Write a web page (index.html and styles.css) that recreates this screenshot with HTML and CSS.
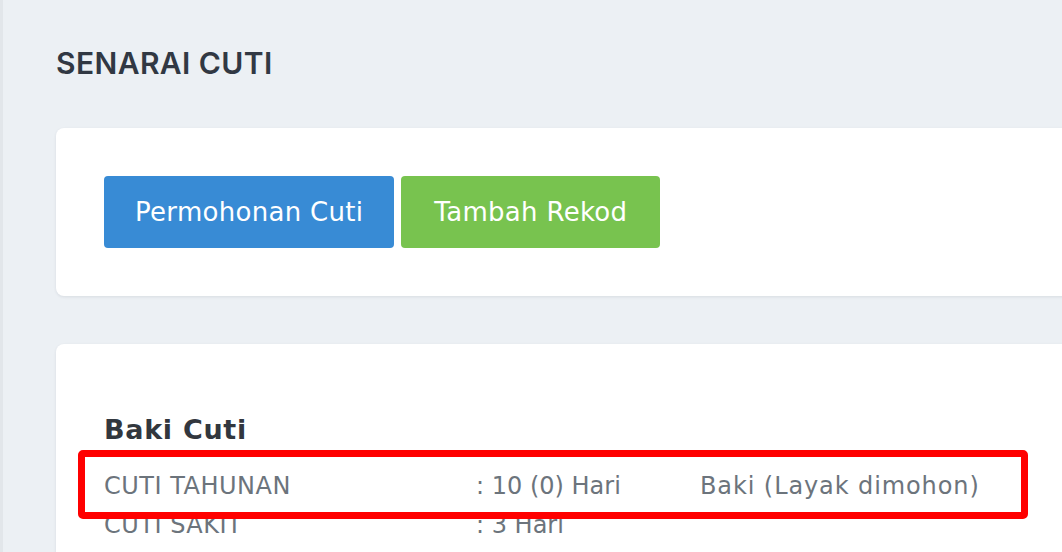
FILE: index.html
```html
<!DOCTYPE html>
<html lang="ms">
<head>
<meta charset="utf-8">
<title>Senarai Cuti</title>
<link rel="stylesheet" href="styles.css">
</head>
<body>
<div class="page">
  <h1 class="page-title">SENARAI CUTI</h1>

  <section class="card card-actions">
    <div class="btn-row">
      <a class="btn btn-primary" href="#">Permohonan Cuti</a>
      <a class="btn btn-success" href="#">Tambah Rekod</a>
    </div>
  </section>

  <section class="card card-balance">
    <h2 class="section-title">Baki Cuti</h2>
    <table class="balance-table">
      <tr>
        <td class="col-label">CUTI TAHUNAN</td>
        <td class="col-value">: 10 (0) Hari</td>
        <td class="col-note">Baki (Layak dimohon)</td>
      </tr>
      <tr>
        <td class="col-label">CUTI SAKIT</td>
        <td class="col-value">: 3 Hari</td>
        <td class="col-note"></td>
      </tr>
    </table>
  </section>

  <div class="highlight"></div>
</div>
</body>
</html>
```

FILE: styles.css
```css
html, body {
  margin: 0;
  padding: 0;
  height: 100%;
  overflow: hidden;
}

body {
  background: #ecf0f4;
  font-family: "DejaVu Sans", Inter, Arial, sans-serif;
}

.page {
  position: relative;
  min-height: 100%;
  border-left: 3px solid #e2e6ea;
  padding: 45px 0 0 53px;
  box-sizing: border-box;
}

.page-title {
  margin: 0 0 47px;
  font-family: Inter, "Open Sans", Arial, sans-serif;
  font-size: 30px;
  line-height: 36px;
  font-weight: 600;
  letter-spacing: 0.4px;
  color: #313843;
}

.card {
  background: #ffffff;
  border-radius: 8px;
  box-shadow: 0 1px 3px rgba(40, 50, 70, 0.10);
  margin-right: -30px;
  padding: 48px;
}

.card-actions {
  margin-bottom: 48px;
}

.btn-row {
  display: flex;
  gap: 7px;
}

.btn {
  display: block;
  padding: 16px 31px;
  font-size: 26px;
  line-height: 40px;
  letter-spacing: 0.3px;
  color: #ffffff;
  text-decoration: none;
  border-radius: 4px;
}

.btn-primary {
  background: #388bd5;
}

.btn-success {
  background: #78c34f;
  padding-left: 33px;
  padding-right: 33px;
}

.card-balance {
  padding-top: 71px;
}

.section-title {
  margin: 0 0 22px;
  font-size: 27px;
  line-height: 30px;
  font-weight: 700;
  letter-spacing: 0.7px;
  color: #32373e;
}

.balance-table {
  border-collapse: collapse;
  font-size: 24px;
  line-height: 39px;
  color: #6c747c;
}

.balance-table td {
  padding: 0;
  white-space: nowrap;
}

.col-label {
  width: 372px;
  letter-spacing: 0.5px;
}

.col-value {
  width: 224px;
}

.col-note {
  letter-spacing: 0.9px;
}

.highlight {
  position: absolute;
  left: 75px;
  top: 450px;
  width: 950px;
  height: 69px;
  box-sizing: border-box;
  border: 7px solid #ff0000;
  border-radius: 5px;
}
```
